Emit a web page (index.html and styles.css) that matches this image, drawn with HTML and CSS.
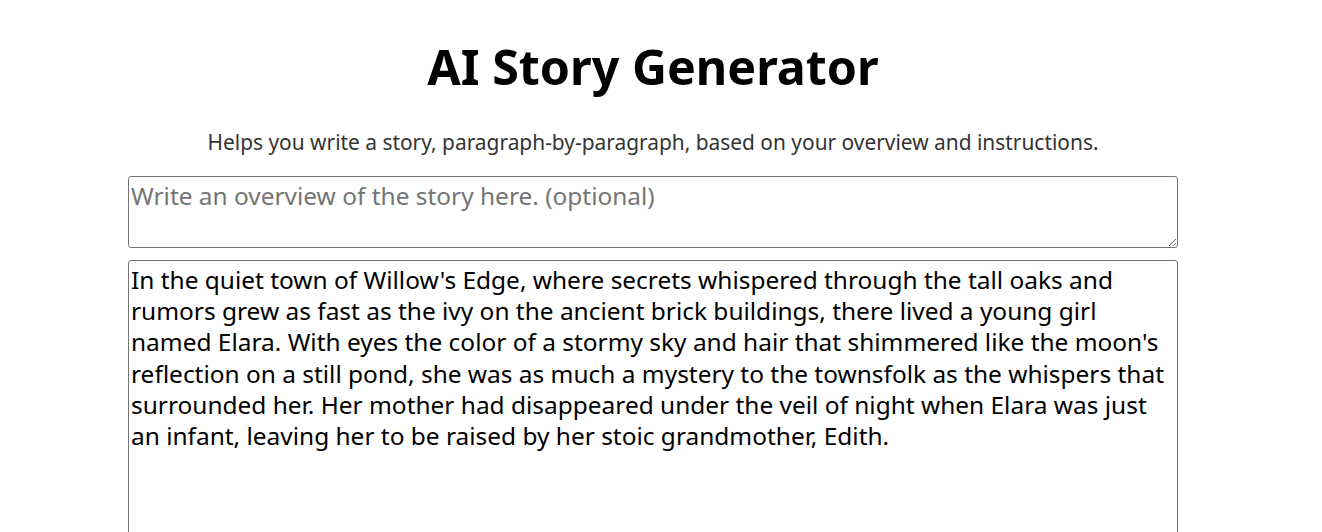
FILE: index.html
```html
<!DOCTYPE html>
<html lang="en">
<head>
<meta charset="utf-8">
<title>AI Story Generator</title>
<link rel="stylesheet" href="styles.css">
</head>
<body>
<div class="page">
  <main class="container">
    <h1 class="title">AI Story Generator</h1>
    <p class="subtitle">Helps you write a story, paragraph-by-paragraph, based on your overview and instructions.</p>
    <textarea class="field overview" placeholder="Write an overview of the story here. (optional)"></textarea>
    <textarea class="field story">In the quiet town of Willow's Edge, where secrets whispered through the tall oaks and rumors grew as fast as the ivy on the ancient brick buildings, there lived a young girl named Elara. With eyes the color of a stormy sky and hair that shimmered like the moon's reflection on a still pond, she was as much a mystery to the townsfolk as the whispers that surrounded her. Her mother had disappeared under the veil of night when Elara was just an infant, leaving her to be raised by her stoic grandmother, Edith.</textarea>
  </main>
</div>
</body>
</html>
```
FILE: styles.css
```css
html, body {
  margin: 0;
  padding: 0;
  background: #fff;
}
body {
  font-family: "Noto Sans", "Open Sans", sans-serif;
  color: #000;
}
.page {
  margin-right: 16px;
}
.container {
  max-width: 1050px;
  margin: 0 auto;
  display: flex;
  flex-direction: column;
}
.title {
  margin: 0;
  padding-top: 33px;
  font-size: 48.4px;
  line-height: 66px;
  font-weight: 700;
  text-align: center;
}
.subtitle {
  margin: 29px 0 0;
  font-size: 20.9px;
  line-height: 28px;
  color: #333;
  text-align: center;
}
.field {
  display: block;
  width: 100%;
  box-sizing: border-box;
  margin: 0;
  padding: 3px 2px 2px;
  border: 1px solid #767676;
  border-radius: 3px;
  font-family: "Noto Sans", "Open Sans", sans-serif;
  font-size: 24.45px;
  line-height: 31.2px;
  color: #000;
  background: #fff;
}
.field::placeholder {
  color: #757575;
}
.overview {
  margin-top: 20px;
  height: 72px;
}
.story {
  margin-top: 12px;
  height: 400px;
}
```
